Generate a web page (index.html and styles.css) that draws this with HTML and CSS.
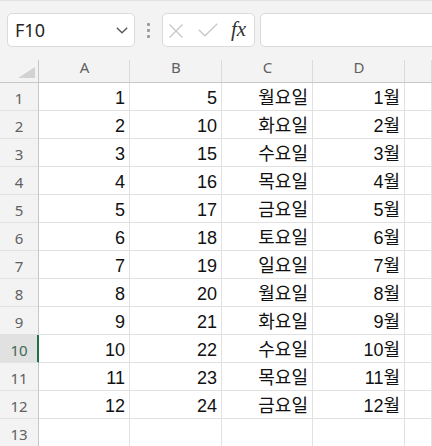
FILE: index.html
```html
<!DOCTYPE html>
<html lang="ko">
<head>
<meta charset="utf-8">
<title>Sheet</title>
<link rel="stylesheet" href="styles.css">
</head>
<body>
<div class="toolbar">
  <div class="namebox">
    <span class="fname">F10</span>
    <svg class="chev" width="12" height="7" viewBox="0 0 12 7"><path d="M0.8 0.8 L6 5.8 L11.2 0.8" fill="none" stroke="#555" stroke-width="1.3"/></svg>
  </div>
  <div class="grip"><i></i><i></i><i></i></div>
  <div class="fbtns">
    <svg class="ic-x" width="16" height="16" viewBox="0 0 16 16"><path d="M1.5 1.5 L14.5 14.5 M14.5 1.5 L1.5 14.5" fill="none" stroke="#c8c8c8" stroke-width="1.3"/></svg>
    <svg class="ic-ok" width="20" height="14" viewBox="0 0 20 14"><path d="M0.7 6.8 L7 12.8 L19.3 0.8" fill="none" stroke="#c8c8c8" stroke-width="1.3"/></svg>
    <span class="fx">fx</span>
  </div>
  <div class="finput"></div>
</div>
<div class="sheet">
  <div class="corner"><svg width="17" height="11" viewBox="0 0 17 11"><path d="M17 0 L17 11 L0 11 Z" fill="#d2d2d2"/></svg></div>
  <div class="ch">A</div><div class="ch">B</div><div class="ch">C</div><div class="ch">D</div><div class="ch"></div>

  <div class="rh">1</div><div class="c">1</div><div class="c">5</div><div class="c">월요일</div><div class="c">1월</div><div class="c"></div>
  <div class="rh">2</div><div class="c">2</div><div class="c">10</div><div class="c">화요일</div><div class="c">2월</div><div class="c"></div>
  <div class="rh">3</div><div class="c">3</div><div class="c">15</div><div class="c">수요일</div><div class="c">3월</div><div class="c"></div>
  <div class="rh">4</div><div class="c">4</div><div class="c">16</div><div class="c">목요일</div><div class="c">4월</div><div class="c"></div>
  <div class="rh">5</div><div class="c">5</div><div class="c">17</div><div class="c">금요일</div><div class="c">5월</div><div class="c"></div>
  <div class="rh">6</div><div class="c">6</div><div class="c">18</div><div class="c">토요일</div><div class="c">6월</div><div class="c"></div>
  <div class="rh">7</div><div class="c">7</div><div class="c">19</div><div class="c">일요일</div><div class="c">7월</div><div class="c"></div>
  <div class="rh">8</div><div class="c">8</div><div class="c">20</div><div class="c">월요일</div><div class="c">8월</div><div class="c"></div>
  <div class="rh">9</div><div class="c">9</div><div class="c">21</div><div class="c">화요일</div><div class="c">9월</div><div class="c"></div>
  <div class="rh sel">10</div><div class="c">10</div><div class="c">22</div><div class="c">수요일</div><div class="c">10월</div><div class="c"></div>
  <div class="rh">11</div><div class="c">11</div><div class="c">23</div><div class="c">목요일</div><div class="c">11월</div><div class="c"></div>
  <div class="rh">12</div><div class="c">12</div><div class="c">24</div><div class="c">금요일</div><div class="c">12월</div><div class="c"></div>
  <div class="rh">13</div><div class="c"></div><div class="c"></div><div class="c"></div><div class="c"></div><div class="c"></div>
</div>
</body>
</html>
```

FILE: styles.css
```css
html, body {
  margin: 0;
  padding: 0;
}
body {
  width: 432px;
  height: 446px;
  overflow: hidden;
  background: #ffffff;
  font-family: "Noto Sans", "Noto Sans CJK KR", sans-serif;
}

/* formula bar */
.toolbar {
  display: flex;
  align-items: flex-start;
  height: 55px;
  box-sizing: border-box;
  border-top: 1px solid #e2e2e2;
  padding: 12px 0 0 7px;
  background: #f3f3f3;
  overflow: hidden;
}
.namebox {
  width: 128px;
  height: 34px;
  flex: none;
  box-sizing: border-box;
  border: 1px solid #dadada;
  border-radius: 5px;
  background: #ffffff;
  display: flex;
  align-items: center;
  justify-content: space-between;
  padding: 0 6px 0 7px;
}
.fname {
  font-size: 18px;
  color: #262626;
  line-height: 20px;
}
.chev {
  display: block;
  margin-top: 1px;
}
.grip {
  flex: none;
  margin-left: 12px;
  margin-top: 10px;
  display: flex;
  flex-direction: column;
  gap: 3px;
}
.grip i {
  display: block;
  width: 3px;
  height: 3px;
  border-radius: 1px;
  background: #9a9a9a;
}
.fbtns {
  flex: none;
  width: 93px;
  height: 34px;
  margin-left: 12px;
  box-sizing: border-box;
  border: 1px solid #dadada;
  border-radius: 5px;
  background: #ffffff;
  display: flex;
  align-items: center;
  padding-left: 5px;
}
.ic-x {
  display: block;
  margin-top: 1px;
}
.ic-ok {
  display: block;
  margin-left: 14px;
}
.fx {
  margin-left: 13px;
  font-family: "Liberation Serif", "DejaVu Serif", serif;
  font-style: italic;
  font-size: 21px;
  line-height: 22px;
  color: #333333;
  margin-top: -2px;
}
.finput {
  flex: 1;
  height: 34px;
  margin-left: 5px;
  margin-right: -10px;
  box-sizing: border-box;
  border: 1px solid #dadada;
  border-radius: 5px;
  background: #ffffff;
}

/* grid */
.sheet {
  display: grid;
  grid-template-columns: 39px 91px 92px 91px 92px 1fr;
  grid-auto-rows: 28px;
}
.corner {
  box-sizing: border-box;
  border-bottom: 1px solid #c8c8c8;
  background: linear-gradient(#c6c6c6, #c6c6c6) right bottom / 1px 22px no-repeat, #f3f3f3;
  display: flex;
  justify-content: flex-end;
  align-items: flex-end;
  padding: 0 4px 4px 0;
}
.corner svg {
  display: block;
}
.ch {
  box-sizing: border-box;
  border-bottom: 1px solid #c8c8c8;
  background: linear-gradient(#dadada, #dadada) right bottom / 1px 22px no-repeat, #f3f3f3;
  text-align: center;
  font-size: 15px;
  line-height: 24px;
  color: #616161;
}
.rh {
  box-sizing: border-box;
  border-right: 1px solid #c6c6c6;
  border-bottom: 1px solid #e1e1e1;
  background: #f3f3f3;
  text-align: center;
  font-size: 15px;
  line-height: 26px;
  padding-top: 2px;
  color: #616161;
}
.rh.sel {
  background: #e1e1e1;
  color: #3a6b51;
  border-right-color: #1e7145;
  box-shadow: inset -1px 0 0 #1e7145;
}
.c {
  box-sizing: border-box;
  border-right: 1px solid #e1e1e1;
  border-bottom: 1px solid #e1e1e1;
  text-align: right;
  padding: 4px 4px 0 0;
  font-family: "Liberation Sans", "Noto Sans CJK KR", sans-serif;
  font-size: 18px;
  line-height: 22px;
  color: #111111;
  white-space: nowrap;
  overflow: hidden;
}
```
